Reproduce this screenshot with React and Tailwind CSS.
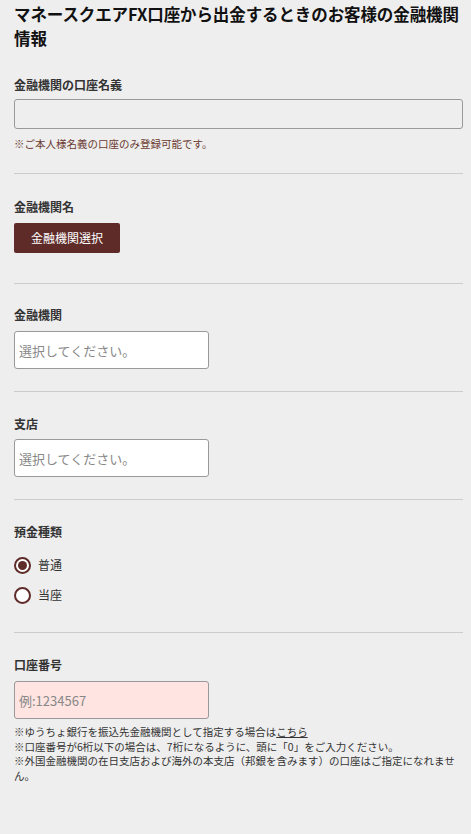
import React, { useState } from 'react';

const font = { fontFamily: '"Noto Sans CJK JP", "Noto Sans", sans-serif' };

const Label = ({ children }) => (
  <p className="text-[12px] leading-[16px] font-bold text-[#333]">{children}</p>
);

const Radio = ({ checked, label, onClick }) => (
  <label className="flex items-center gap-[7px] h-[30px] cursor-pointer" onClick={onClick}>
    <span className="w-[17px] h-[17px] rounded-full border-2 border-[#5e2b28] flex items-center justify-center bg-white">
      {checked && <span className="w-[9px] h-[9px] rounded-full bg-[#5e2b28]" />}
    </span>
    <span className="text-[12px] text-[#333]">{label}</span>
  </label>
);

const App = () => {
  const [kind, setKind] = useState('futsu');

  return (
    <div className="min-h-[834px] bg-[#eeeeee] pl-[14px] pr-[8px] pt-[2px] pb-10" style={font}>
      <h1 className="text-[16.5px] leading-[24px] font-bold text-[#111] tracking-[-0.1px]">
        マネースクエアFX口座から出金するときのお客様の金融機関情報
      </h1>

      {/* 口座名義 */}
      <div className="pt-[27px] pb-[22px] border-b border-[#cccccc]">
        <Label>金融機関の口座名義</Label>
        <input
          type="text"
          className="mt-[6px] block w-full h-[30px] rounded-[3px] border border-[#999] bg-[#eeeeee] outline-none"
        />
        <p className="mt-[8px] text-[10.5px] leading-[14px] text-[#6b3a30]">※ご本人様名義の口座のみ登録可能です。</p>
      </div>

      {/* 金融機関名 */}
      <div className="pt-[25px] pb-[30px] border-b border-[#cccccc]">
        <Label>金融機関名</Label>
        <button className="mt-[8px] h-[30px] px-[17px] rounded-[2px] bg-[#5e2b28] text-white text-[12px]">
          金融機関選択
        </button>
      </div>

      {/* 金融機関 */}
      <div className="pt-[23px] pb-[22px] border-b border-[#cccccc]">
        <Label>金融機関</Label>
        <input
          type="text"
          placeholder="選択してください。"
          className="mt-[8px] block w-[195px] h-[38px] rounded-[3px] border border-[#999] bg-white px-[4px] text-[13px] placeholder:text-[#888] outline-none"
        />
      </div>

      {/* 支店 */}
      <div className="pt-[24px] pb-[22px] border-b border-[#cccccc]">
        <Label>支店</Label>
        <input
          type="text"
          placeholder="選択してください。"
          className="mt-[7px] block w-[195px] h-[38px] rounded-[3px] border border-[#999] bg-white px-[4px] text-[13px] placeholder:text-[#888] outline-none"
        />
      </div>

      {/* 預金種類 */}
      <div className="pt-[24px] pb-[22px] border-b border-[#cccccc]">
        <Label>預金種類</Label>
        <div className="mt-[10px]">
          <Radio checked={kind === 'futsu'} label="普通" onClick={() => setKind('futsu')} />
          <Radio checked={kind === 'toza'} label="当座" onClick={() => setKind('toza')} />
        </div>
      </div>

      {/* 口座番号 */}
      <div className="pt-[24px]">
        <Label>口座番号</Label>
        <input
          type="text"
          placeholder="例:1234567"
          className="mt-[8px] block w-[195px] h-[38px] rounded-[3px] border border-[#999] bg-[#ffe4e1] px-[4px] text-[13px] placeholder:text-[#888] outline-none"
        />
        <div className="mt-[6px] text-[10.5px] leading-[14.5px] text-[#333]">
          <p>※ゆうちょ銀行を振込先金融機関として指定する場合は<span className="underline">こちら</span></p>
          <p>※口座番号が6桁以下の場合は、7桁になるように、頭に「0」をご入力ください。</p>
          <p>※外国金融機関の在日支店および海外の本支店（邦銀を含みます）の口座はご指定になれません。</p>
        </div>
      </div>
    </div>
  );
};

export default App;
